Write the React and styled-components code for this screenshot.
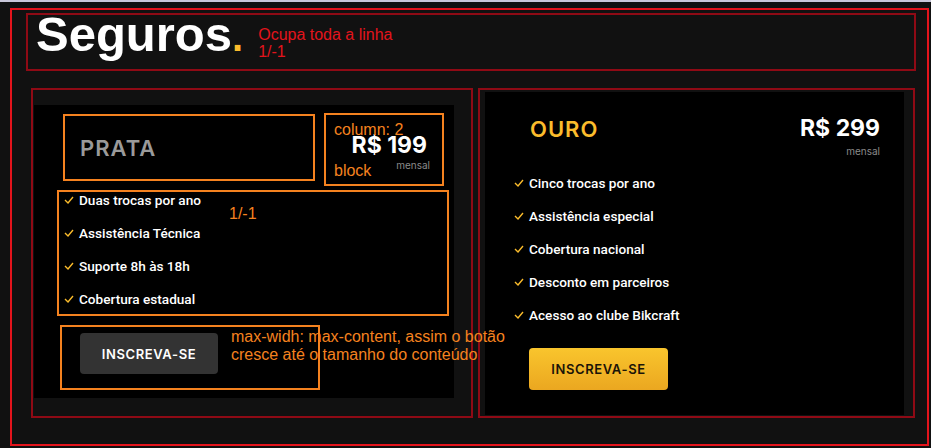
import styled, { createGlobalStyle } from 'styled-components';

const GlobalStyle = createGlobalStyle`
  * { box-sizing: border-box; }
  body {
    margin: 0;
    background: #111;
    font-family: "Liberation Sans", Arial, sans-serif;
  }
`;

const RED = '#e3141c';
const DARK_RED = '#8f0a15';
const ORANGE = '#f5821f';
const YELLOW = '#fbbc2c';

const Page = styled.div`
  border-top: 2px solid #c9c7d9;
  padding: 6px 0 0 10px;
  height: 448px;
`;

const Outline = styled.main`
  width: 919px;
  height: 438px;
  border: 2px solid ${RED};
  padding: 3px 0 0 14px;
`;

const Header = styled.header`
  width: 890px;
  height: 58px;
  border: 2px solid ${DARK_RED};
  padding-left: 8px;
  display: flex;
  align-items: flex-start;
`;

const Title = styled.h1`
  margin: 0;
  font-family: "Liberation Sans", Arial, sans-serif;
  font-weight: 700;
  font-size: 49px;
  line-height: 38px;
  color: #fff;

  span { color: ${YELLOW}; font-size: 40px; }
`;

const Note = styled.p`
  margin: ${p => p.$mt || 0}px 0 0 ${p => p.$ml || 0}px;
  font-family: "Liberation Sans", Arial, sans-serif;
  font-size: 16px;
  line-height: 17px;
  color: ${p => p.$color || RED};
  white-space: pre;
`;

const FloatNote = styled(Note)`
  position: absolute;
  left: ${p => p.$x}px;
  top: ${p => p.$y}px;
  margin: 0;
  line-height: ${p => p.$lh || 17}px;
  z-index: 2;
`;

const Plans = styled.section`
  display: grid;
  grid-template-columns: 442px 437px;
  gap: 5px;
  margin: 17px 0 0 5px;
  height: 330px;
`;

const Area = styled.div`
  border: 2px solid ${DARK_RED};
  padding: ${p => p.$pad};
  display: flex;
`;

const Card = styled.article`
  flex: 1;
  background: #000;
  position: relative;
  padding: ${p => p.$pad};
  display: flex;
  flex-direction: column;
  align-items: flex-start;
`;

const TopRow = styled.div`
  display: flex;
  align-items: flex-start;
  justify-content: ${p => p.$justify || 'flex-start'};
  gap: 9px;
  width: 100%;
`;

const Box = styled.div`
  border: 2px solid ${ORANGE};
  position: relative;
  width: ${p => p.$w}px;
  height: ${p => p.$h}px;
  margin: ${p => p.$m || 0};
  padding: ${p => p.$pad || 0};
  display: flex;
  flex-direction: column;
  justify-content: ${p => p.$justify || 'flex-start'};
  align-items: ${p => p.$align || 'flex-start'};
`;

const PlanName = styled.h2`
  margin: ${p => p.$m || 0};
  font-family: Inter, "Open Sans", sans-serif;
  font-weight: 600;
  font-size: 22px;
  line-height: 26px;
  letter-spacing: 1px;
  color: ${p => p.$color};
`;

const Price = styled.div`
  display: flex;
  flex-direction: column;
  align-items: flex-end;
`;

const Amount = styled.strong`
  font-family: Inter, "Open Sans", sans-serif;
  font-weight: 700;
  font-size: 23px;
  line-height: 26px;
  color: #fff;
`;

const Period = styled.span`
  font-family: Inter, "Open Sans", sans-serif;
  font-size: 10px;
  line-height: 12px;
  color: #8a8a8a;
  margin: ${p => p.$m || '4px 0 0'};
`;

const Features = styled.ul`
  list-style: none;
  margin: ${p => p.$m || 0};
  padding: 0;
  display: flex;
  flex-direction: column;
  gap: 17px;
`;

const Feature = styled.li`
  display: flex;
  align-items: center;
  gap: 5px;
  font-family: Roboto, "Noto Sans", sans-serif;
  font-weight: 500;
  font-size: 13.6px;
  line-height: 16px;
  color: #fff;
`;

const Button = styled.button`
  width: ${p => p.$w}px;
  height: ${p => p.$h || 41}px;
  border: none;
  border-radius: 4px;
  font-family: Inter, "Open Sans", sans-serif;
  font-weight: 600;
  font-size: 13px;
  letter-spacing: 0.6px;
  margin: ${p => p.$m || 0};
  cursor: pointer;
  color: ${p => (p.$gold ? '#1a1408' : '#fff')};
  background: ${p => (p.$gold ? 'linear-gradient(#f9c52d, #eba720)' : '#333')};
`;

const Check = () => (
  <svg width="10" height="8" viewBox="0 0 10 8" fill="none">
    <path d="M1 4l3 3 5-6" stroke={YELLOW} strokeWidth="1.4" />
  </svg>
);

const List = ({ items, m }) => (
  <Features $m={m}>
    {items.map(t => (
      <Feature key={t}>
        <Check />
        {t}
      </Feature>
    ))}
  </Features>
);

export default function App() {
  return (
    <>
      <GlobalStyle />
      <Page>
        <Outline>
          <Header>
            <Title>
              Seguros<span>.</span>
            </Title>
            <Note $mt={11} $ml={15}>{'Ocupa toda a linha\n1/-1'}</Note>
          </Header>
          <Plans>
            <Area $pad="15px 17px 18px 1px">
              <Card $pad="8px 0 0 23px">
                <TopRow>
                  <Box $w={252} $h={67} $m="1px 0 0 6px" $pad="0 0 0 15px" $justify="center">
                    <PlanName $color="#9a9a9a">PRATA</PlanName>
                  </Box>
                  <Box $w={120} $h={73} $pad="17px 15px 0 0" $align="flex-end">
                    <FloatNote $color={ORANGE} $x={8} $y={6}>column: 2</FloatNote>
                    <FloatNote $color={ORANGE} $x={8} $y={47}>block</FloatNote>
                    <Price>
                      <Amount>R$ 199</Amount>
                      <Period $m="1px -3px 0 0">mensal</Period>
                    </Price>
                  </Box>
                </TopRow>
                <Box $w={392} $h={126} $m="4px 0 0" $pad="0 0 0 5px">
                  <FloatNote $color={ORANGE} $x={170} $y={13}>1/-1</FloatNote>
                  <List
                    items={[
                      'Duas trocas por ano',
                      'Assistência Técnica',
                      'Suporte 8h às 18h',
                      'Cobertura estadual',
                    ]}
                  />
                </Box>
                <Box $w={260} $h={65} $m="9px 0 0 3px" $pad="6px 0 0 18px">
                  <Button $w={138}>INSCREVA-SE</Button>
                  <FloatNote $color={ORANGE} $x={169} $y={1} $lh={18}>
                    {'max-widh: max-content, assim o botão\ncresce até o tamanho do conteúdo'}
                  </FloatNote>
                </Box>
              </Card>
            </Area>
            <Area $pad="2px 9px 1px 5px">
              <Card $pad="23px 24px 0 29px">
                <TopRow $justify="space-between">
                  <PlanName $color={YELLOW} $m="1px 0 0 16px">OURO</PlanName>
                  <Price>
                    <Amount>R$ 299</Amount>
                    <Period>mensal</Period>
                  </Price>
                </TopRow>
                <List
                  m="18px 0 0"
                  items={[
                    'Cinco trocas por ano',
                    'Assistência especial',
                    'Cobertura nacional',
                    'Desconto em parceiros',
                    'Acesso ao clube Bikcraft',
                  ]}
                />
                <Button $gold $w={139} $h={42} $m="25px 0 0 15px">
                  INSCREVA-SE
                </Button>
              </Card>
            </Area>
          </Plans>
        </Outline>
      </Page>
    </>
  );
}
